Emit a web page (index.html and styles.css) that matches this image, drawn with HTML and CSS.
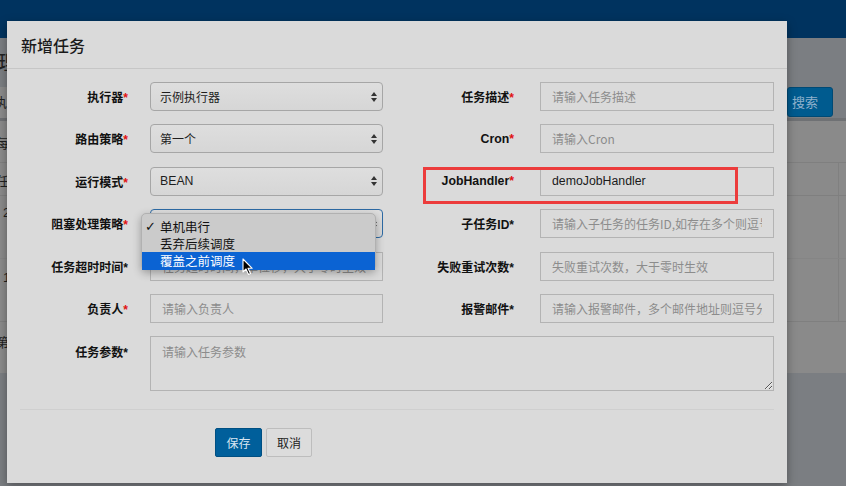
FILE: index.html
```html
<!DOCTYPE html>
<html lang="zh-CN">
<head>
<meta charset="utf-8">
<title>新增任务</title>
<link rel="stylesheet" href="styles.css">
</head>
<body>
<div class="page">
  <header class="topbar"></header>
  <div class="content">
    <div class="content-head"><span class="page-title">任务管理</span></div>
    <div class="search-row">
      <div class="search-input">执行器</div>
      <div class="search-btn">搜索</div>
    </div>
    <div class="table-box">
      <div class="trow r1"><span class="cell">每</span></div>
      <div class="trow r2"><span class="cell">任</span></div>
      <div class="trow r3"><span class="cell num">2</span></div>
      <div class="trow r4"><span class="cell num">1</span></div>
      <div class="trow r5"><span class="cell">第</span></div>
    </div>
  </div>
</div>

<div class="modal">
  <div class="modal-header">新增任务</div>
  <div class="modal-body">
    <form class="form-grid">
      <label class="lbl">执行器<i class="req">*</i></label>
      <div class="select"><span>示例执行器</span><svg class="arrows" width="6" height="10" viewBox="0 0 6 10"><path d="M3 0L6 4H0Z M3 10L0 6H6Z" fill="#333"/></svg></div>
      <label class="lbl">任务描述<i class="req">*</i></label>
      <input class="input" type="text" placeholder="请输入任务描述">

      <label class="lbl">路由策略<i class="req">*</i></label>
      <div class="select"><span>第一个</span><svg class="arrows" width="6" height="10" viewBox="0 0 6 10"><path d="M3 0L6 4H0Z M3 10L0 6H6Z" fill="#333"/></svg></div>
      <label class="lbl latin">Cron<i class="req">*</i></label>
      <input class="input" type="text" placeholder="请输入Cron">

      <label class="lbl">运行模式<i class="req">*</i></label>
      <div class="select"><span class="latin-val">BEAN</span><svg class="arrows" width="6" height="10" viewBox="0 0 6 10"><path d="M3 0L6 4H0Z M3 10L0 6H6Z" fill="#333"/></svg></div>
      <label class="lbl latin">JobHandler<i class="req">*</i></label>
      <input class="input value" type="text" value="demoJobHandler">

      <label class="lbl">阻塞处理策略<i class="req">*</i></label>
      <div class="select focused"><span>单机串行</span><svg class="arrows" width="6" height="10" viewBox="0 0 6 10"><path d="M3 0L6 4H0Z M3 10L0 6H6Z" fill="#333"/></svg></div>
      <label class="lbl">子任务ID*</label>
      <input class="input" type="text" placeholder="请输入子任务的任务ID,如存在多个则逗号分隔">

      <label class="lbl">任务超时时间*</label>
      <input class="input" type="text" placeholder="任务超时时间，单位秒，大于零时生效">
      <label class="lbl">失败重试次数*</label>
      <input class="input" type="text" placeholder="失败重试次数，大于零时生效">

      <label class="lbl">负责人<i class="req">*</i></label>
      <input class="input" type="text" placeholder="请输入负责人">
      <label class="lbl">报警邮件*</label>
      <input class="input" type="text" placeholder="请输入报警邮件，多个邮件地址则逗号分隔">

      <label class="lbl lbl-top">任务参数*</label>
      <textarea class="textarea" placeholder="请输入任务参数"></textarea>
    </form>
    <div class="modal-footer">
      <button class="btn btn-primary" type="button">保存</button>
      <button class="btn btn-default" type="button">取消</button>
    </div>
  </div>
  <div class="highlight"></div>
  <ul class="dropdown">
    <li class="opt checked"><span class="check">✓</span>单机串行</li>
    <li class="opt">丢弃后续调度</li>
    <li class="opt active">覆盖之前调度</li>
  </ul>
  <svg class="cursor" width="12" height="18" viewBox="0 0 12 18">
    <path d="M1 1 L1 14 L4 11 L6.5 16.5 L8.5 15.6 L6 10.3 L10.2 10.3 Z" fill="#000" stroke="#fff" stroke-width="1.1" stroke-linejoin="round"/>
  </svg>
</div>
</body>
</html>
```

FILE: styles.css
```css
* { box-sizing: border-box; }
html, body { margin: 0; padding: 0; }
body {
  width: 846px;
  height: 486px;
  overflow: hidden;
  background: #7b7e82;
  font-family: "Liberation Sans", "Noto Sans CJK SC", sans-serif;
  font-size: 12px;
  color: #1a1a1a;
  position: relative;
}

/* ---------- background page (dimmed by backdrop) ---------- */
.page { width: 846px; }
.topbar { height: 38px; background: #00335f; }
.content { background: #7b7e82; }
.content-head { height: 47px; overflow: hidden; position: relative; }
.page-title {
  display: block;
  margin-left: -62px;
  padding-top: 9px;
  font-size: 20px;
  color: #222;
  font-family: "Noto Sans CJK SC", sans-serif;
}
.search-row {
  height: 33px;
  display: flex;
  justify-content: space-between;
  align-items: flex-start;
  padding-top: 2px;
}
.search-input {
  width: 120px;
  height: 31px;
  margin-left: -8px;
  background: #8b8b8b;
  color: #222;
  font-size: 13px;
  line-height: 29px;
  padding-left: 2px;
  font-family: "Noto Sans CJK SC", sans-serif;
}
.search-btn {
  width: 46px;
  height: 30px;
  margin-right: 13px;
  background: #005b8f;
  border: 1px solid #004a75;
  border-radius: 3px;
  color: #8fb1cc;
  font-size: 13px;
  line-height: 28px;
  padding-left: 4px;
  font-family: "Noto Sans CJK SC", sans-serif;
}
.table-box {
  border-top: 3px solid #6f7174;
  background: #8a8a8a;
}
.trow {
  border-bottom: 1px solid #7f7f7f;
  position: relative;
  color: #1f1f1f;
  font-size: 13px;
  font-family: "Noto Sans CJK SC", sans-serif;
}
.trow .cell { position: absolute; left: -4px; }
.trow .cell.num { left: 3px; font-family: "Liberation Sans", sans-serif; }
.r1 { height: 42px; }
.r1 .cell { top: 12px; }
.r2 { height: 33px; }
.r2 .cell { top: 8px; }
.r3 { height: 63px; border-bottom-color: #858585; }
.r3 .cell { top: 9px; }
.r4 { height: 63px; }
.r4 .cell { top: 11px; }
.r5 { height: 51px; border-bottom: none; }
.r5 .cell { top: 10px; }
.r2::after, .r3::after, .r4::after {
  content: "";
  position: absolute;
  left: 838px;
  top: 0;
  bottom: 0;
  border-left: 1px solid #808080;
}

/* ---------- modal ---------- */
.modal {
  position: absolute;
  left: 7px;
  top: 21px;
  width: 780px;
  height: 462px;
  background: #dadada;
  box-shadow: 0 3px 9px rgba(0,0,0,0.35);
}
.modal-header {
  height: 48px;
  border-bottom: 1px solid #c6c6c6;
  padding: 0 14px;
  display: flex;
  align-items: center;
  font-family: "Noto Sans CJK SC", sans-serif;
  font-size: 16px;
  font-weight: 500;
  color: #1a1a1a;
}
.modal-body { padding-top: 13px; }

.form-grid {
  margin: 0;
  display: grid;
  grid-template-columns: 143px 233px 157px 234px;
  grid-auto-rows: 29px;
  row-gap: 13.4px;
  align-items: center;
}
.form-grid > .lbl:nth-child(4n+1) { padding-right: 22px; }
.form-grid > .lbl:nth-child(4n+3) { padding-right: 26px; }
.lbl {
  text-align: right;
  font-weight: bold;
  font-size: 12px;
  color: #111;
  font-family: "Liberation Sans", "Noto Sans CJK SC", sans-serif;
  white-space: nowrap;
}
.lbl.latin { font-size: 12.3px; }
.lbl-top { align-self: start; padding-top: 7px; }
.req { color: #e01010; font-style: normal; }

.select {
  height: 29px;
  border: 1px solid #a6a6a6;
  border-radius: 4px;
  background: linear-gradient(#dedede, #d6d6d6);
  display: flex;
  align-items: center;
  justify-content: space-between;
  padding: 0 5px 0 9px;
  font-family: "Noto Sans CJK SC", sans-serif;
  font-size: 12px;
  color: #1e1e1e;
}
.select .latin-val { font-family: "Liberation Sans", sans-serif; font-size: 12.3px; }
.select.focused { border-color: #2d6aa4; }

.input {
  height: 29px;
  width: 100%;
  margin: 0;
  border: 1px solid #b3b3b3;
  border-radius: 0;
  background: #dadada;
  padding: 0 11px;
  font-family: "Noto Sans CJK SC", sans-serif;
  font-size: 12px;
  color: #222;
  outline: none;
}
.input.value { font-family: "Liberation Sans", sans-serif; font-size: 12.3px; color: #1a1a1a; }
.input::placeholder { color: #8c8c8c; opacity: 1; }

.textarea {
  grid-column: 2 / 5;
  height: 55px;
  align-self: start;
  width: 100%;
  margin: 0;
  border: 1px solid #b3b3b3;
  background: #dadada;
  padding: 6px 11px;
  font-family: "Noto Sans CJK SC", sans-serif;
  font-size: 12px;
  resize: vertical;
  outline: none;
}
.textarea::placeholder { color: #8c8c8c; opacity: 1; }

.modal-footer {
  margin: 0 13px 0 13px;
  margin-top: 44px;
  border-top: 1px solid #cfcfcf;
  padding-top: 18px;
  padding-left: 195px;
  display: flex;
  gap: 4px;
}
.btn {
  height: 29px;
  margin: 0;
  padding: 0 9px;
  border-radius: 2px;
  font-family: "Noto Sans CJK SC", sans-serif;
  font-size: 12px;
  line-height: 27px;
}
.btn-primary {
  width: 47px;
  background: #005f9b;
  border: 1px solid #004f82;
  color: #d8e6f2;
}
.btn-default {
  width: 46px;
  background: #dcdcdc;
  border: 1px solid #bdbdbd;
  color: #222;
}

/* ---------- overlays ---------- */
.highlight {
  position: absolute;
  left: 416px;
  top: 146px;
  width: 315px;
  height: 37px;
  border: 3px solid #ec3c3c;
}
.dropdown {
  position: absolute;
  left: 134px;
  top: 192px;
  width: 235px;
  height: 57px;
  margin: 0;
  padding: 4px 0 0;
  list-style: none;
  background: #cbcbcb;
  border: 1px solid #b1b1b1;
  border-radius: 5px;
  box-shadow: 0 3px 8px rgba(0,0,0,0.3);
  font-family: "Noto Sans CJK SC", sans-serif;
  font-size: 12.5px;
  color: #111;
}
.opt {
  height: 17px;
  line-height: 17px;
  padding-left: 18px;
  position: relative;
}
.opt .check {
  position: absolute;
  left: 3px;
  top: 0;
  font-family: "DejaVu Sans", sans-serif;
  font-size: 13px;
  font-weight: bold;
}
.opt.active {
  background: #0b63d3;
  color: #fff;
  height: 18px;
}
.cursor {
  position: absolute;
  left: 235px;
  top: 237px;
}
```
